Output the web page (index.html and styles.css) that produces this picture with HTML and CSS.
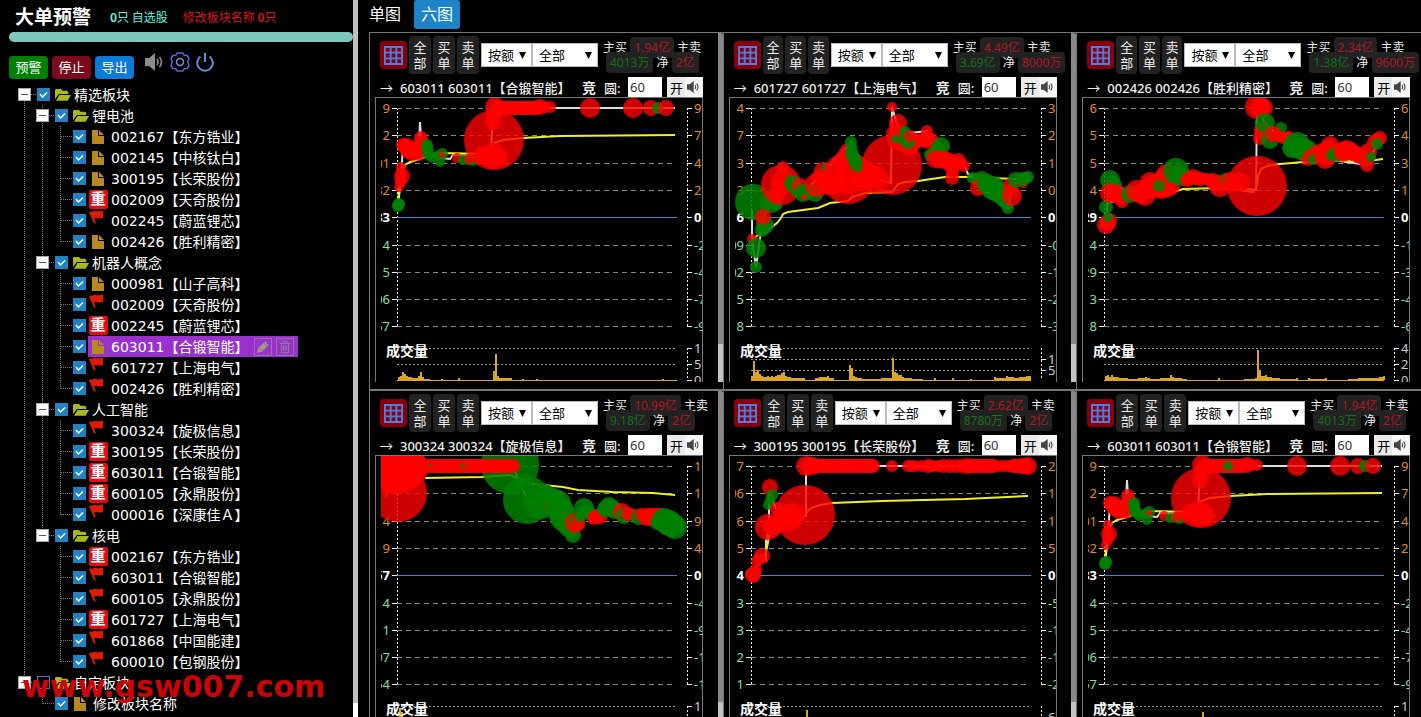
FILE: index.html
```html
<!DOCTYPE html>
<html lang="zh-CN">
<head>
  <meta charset="utf-8">
  <title>大单预警</title>
  <link rel="stylesheet" href="styles.css">
</head>
<body>
  <svg class="defs" aria-hidden="true">
    <symbol id="i-folder" viewBox="0 0 16 14">
      <path fill="#a9b91c" d="M1 12.800 4.300 7H16l-3.300 5.800z"/>
      <path fill="#a9b91c" d="M0 11V2l1-1h5l1.500 1.800H12L13.300 4v2H4z"/>
      <path stroke="#000" stroke-width=".7" fill="none" d="M.5 12.500 4.100 6.500H16"/>
    </symbol>
    <symbol id="i-doc" viewBox="0 0 12 14">
      <path fill="#b8891c" d="M0 0h6v6h6v8H0z"/>
      <path fill="#b8891c" d="M7 0l5 5H7z"/>
    </symbol>
    <symbol id="i-flag" viewBox="0 0 15 14">
      <path fill="#e01b05" d="M0 2l1.500-.8L3 2c3-2.500 6 .5 11-1.500v7.500c-4 1.500-6-.800-9 .5l1.800 5H5z"/>
    </symbol>
    <symbol id="i-grid" viewBox="0 0 20 20">
      <path fill="none" stroke="#4a7fe8" stroke-width="2" d="M1 1h18v18H1zM7 1v18M13 1v18M1 7h18M1 13h18"/>
    </symbol>
    <symbol id="i-sound" viewBox="0 0 18 18">
      <path fill="currentColor" d="M0 5h4l6-5v18l-6-5H0z"/>
      <path fill="none" stroke="currentColor" stroke-width="1.600" d="M12 6q2 3 0 6M14.500 4q4 5 0 10"/>
    </symbol>
    <symbol id="i-pen" viewBox="0 0 16 16">
      <path fill="#a89a7c" d="M2 14l1.200-5L10 2.500 13.500 6 7 12.800z"/>
      <path stroke="#8a55a8" fill="none" d="M4 9l3 3M9 4l3 3"/>
    </symbol>
    <symbol id="i-trash" viewBox="0 0 16 16">
      <path fill="none" stroke="#8b7f9c" d="M3 4.500h10M6 4V2.500h4V4M4.500 5v8.500h7V5M6.500 6.500v5M8 6.500v5M9.500 6.500v5"/>
    </symbol>
  </svg>

  <div class="page">
    <aside class="side">
      <div class="side-body">
        <header class="head">
          <h1>大单预警</h1>
          <span class="mine"><b>0</b>只 自选股</span>
          <span class="edit-count">修改板块名称 <b>0</b>只</span>
        </header>
        <div class="bar"></div>
        <div class="actions">
          <button class="btn btn-warn">预警</button>
          <button class="btn btn-stop">停止</button>
          <button class="btn btn-export">导出</button>
          <button class="icon-btn icon-sound" aria-label="声音"><svg width="18" height="18"><use href="#i-sound"/></svg></button>
          <button class="icon-btn" aria-label="设置">
            <svg width="20" height="20" viewBox="0 0 20 20" fill="none" stroke="#5c62d8" stroke-width="1.500">
              <path d="M7 1h6l1.200 2.300 3 .2L19 6.500l-1.300 3.500L19 13.500l-1.800 3-3 .2L13 19H7l-1.200-2.300-3-.2-1.800-3L2.300 10 1 6.500l1.800-3 3-.2z" stroke-linejoin="round"/>
              <circle cx="10" cy="10" r="3.500" stroke="#8590c8"/>
            </svg>
          </button>
          <button class="icon-btn" aria-label="关闭">
            <svg width="18" height="20" viewBox="0 0 18 20" fill="none" stroke="#5f8fd6" stroke-width="2">
              <path d="M9 1v9M4.500 4.500a7.800 7.800 0 1 0 9 0"/>
            </svg>
          </button>
        </div>
        <ul class="tree" id="tree"></ul>
        <div class="watermark">www.gsw007.com</div>
      </div>
      <div class="side-rail"></div>
    </aside>

    <main class="main">
      <nav class="tabs">
        <a href="#one">单图</a>
        <a href="#six" class="active">六图</a>
      </nav>
      <div class="panels" id="panels"></div>
    </main>
  </div>

  <script src="script.js"></script>
</body>
</html>
```

FILE: styles.css
```css
* {
  box-sizing: border-box;
}

body {
  margin: 0;
  background: #000;
  color: #fff;
  font-family: "Noto Sans", "Noto Sans CJK SC", sans-serif;
  font-size: 13px;
}

button,
select,
input {
  font-family: inherit;
  font-size: 13px;
  margin: 0;
  padding: 0;
  border: 0;
}

svg {
  display: block;
}

.defs {
  position: absolute;
  width: 0;
  height: 0;
}

.page {
  display: flex;
  height: 100vh;
  overflow: hidden;
}

/* sidebar */
.side {
  flex: 0 0 358px;
  display: flex;
  overflow: hidden;
}

.side-body {
  flex: 1;
  position: relative;
}

.side-rail {
  width: 5px;
  background: linear-gradient(#c0c0c4 98%, #fff 98%);
}

.head {
  display: flex;
  align-items: center;
  height: 32px;
  padding-left: 15px;
  font-family: "Noto Sans CJK SC", sans-serif;
  font-size: 12px;
}

.head h1 {
  margin: 0 19px 0 0;
  font-size: 19px;
  line-height: 30px;
}

.mine {
  color: #62f0dc;
  margin-right: 15px;
}

.edit-count {
  color: #dc1515;
}

.bar {
  height: 10px;
  margin-left: 9px;
  border-radius: 5px;
  background: #7cc8bf;
}

.actions {
  display: flex;
  align-items: flex-end;
  gap: 4px;
  height: 42px;
  padding: 0 0 5px 9px;
}

.btn {
  width: 39px;
  height: 23px;
  border-radius: 4px;
  color: #fff;
  line-height: 23px;
}

.btn-warn { background: #008000; }
.btn-stop { background: #7a0a1c; }
.btn-export { background: #0a7bd6; }

.icon-btn {
  align-self: flex-start;
  margin: 10px 2px 0 0;
  background: none;
}

.icon-sound {
  margin: 11px 3px 0 7px;
  color: #8c8c8c;
}

.tree,
.tree ul {
  list-style: none;
  margin: 0;
  padding: 0;
}

.tree {
  padding-left: 16px;
  font-family: "DejaVu Sans", "Noto Sans CJK SC", sans-serif;
  font-size: 14px;
}

.tree ul {
  padding-left: 18px;
}

.tree li {
  position: relative;
}

.tree li::before {
  content: "";
  position: absolute;
  left: 8px;
  top: 0;
  bottom: 0;
  border-left: 1px dotted #777;
}

.tree > li:first-child::before {
  top: 10px;
}

.tree li:last-child::before {
  bottom: auto;
  height: 11px;
}

.row {
  display: flex;
  align-items: center;
  position: relative;
  height: 21px;
}

.row::before {
  content: "";
  position: absolute;
  left: 9px;
  width: 11px;
  border-top: 1px dotted #777;
}

.switch {
  position: relative;
  width: 13px;
  height: 13px;
  margin-left: 2px;
  border: 1px solid #aaa;
  background: linear-gradient(#555, #555) center / 7px 1px no-repeat #fff;
}

.switch-none {
  width: 15px;
}

.row input {
  appearance: none;
  width: 13px;
  height: 13px;
  margin: 0 2px 0 6px;
  border: 1px solid #2a7fb8;
}

.row input:checked {
  background: #1e84c7 url("data:image/svg+xml,%3Csvg xmlns='http://www.w3.org/2000/svg' viewBox='0 0 11 11'%3E%3Cpath d='M2 5l2.500 3L9 3.500' fill='none' stroke='white' stroke-width='1.500'/%3E%3C/svg%3E");
}

.row label {
  padding-bottom: 2px;
}

.name {
  display: flex;
  align-items: center;
  height: 21px;
  white-space: nowrap;
}

.name.on {
  width: 210px;
  background: #9932cc;
}

.ico {
  display: flex;
  justify-content: center;
  width: 20px;
  margin-right: 3px;
}

.group > .row .ico {
  width: 22px;
  margin-right: 0;
}

.ico-flag {
  align-self: flex-start;
  justify-content: flex-start;
  padding-left: 1px;
}

.heavy {
  width: 19px;
  height: 19px;
  border-radius: 2px;
  background: #e60a12;
  color: #fff;
  font-weight: bold;
  font-size: 15px;
  line-height: 19px;
  text-align: center;
}

.tool {
  width: 18px;
  height: 18px;
  margin-left: 4px;
  border: 1px solid #9b6fae;
  background: none;
}

label + .tool {
  margin-left: 6px;
}

.watermark {
  position: absolute;
  top: 669px;
  left: 22px;
  color: #cc0404;
  font: bold 30px/36px "DejaVu Sans", sans-serif;
}

/* right part */
.main {
  flex: 1;
  min-width: 0;
  overflow: hidden;
  padding-left: 11px;
}

.tabs {
  display: flex;
  gap: 13px;
  height: 32px;
}

.tabs a {
  color: #fff;
  font-family: "Noto Sans CJK SC", sans-serif;
  font-size: 16px;
  line-height: 26px;
  text-decoration: none;
}

.tabs .active {
  height: 29px;
  padding: 0 7px;
  border-radius: 3px;
  background: #1e84c7;
}

.panels {
  display: grid;
  grid-template-columns: repeat(3, 1fr);
  margin-right: -9px;
}

.panel {
  display: flex;
  min-width: 0;
  padding-bottom: 7px;
  border: solid #777;
  border-width: 1px 0 1px 1px;
}

.panel-body {
  flex: 1;
  min-width: 0;
}

.rail {
  width: 5px;
  border-radius: 0 2px 0 0;
  background: linear-gradient(#888 89%, #c4c4c4 89%);
}

.toolbar {
  display: flex;
  align-items: center;
  gap: 2px;
  height: 41px;
  padding: 3px 6px 0 10px;
}

.grid-btn {
  flex: none;
  width: 27px;
  height: 28px;
  padding: 0 4px;
  border-radius: 4px;
  background: #8b0008;
}

.side-btn {
  flex: 0 1 22px;
  min-width: 20px;
  height: 38px;
  border-radius: 4px;
  background: #222;
  color: #eee;
  line-height: 16px;
}

.selects {
  display: flex;
  flex: none;
}

.selects select {
  appearance: none;
  height: 24px;
  padding-left: 6px;
  border: 1px solid #bbb;
  border-radius: 0;
  background: #fff url("data:image/svg+xml,%3Csvg xmlns='http://www.w3.org/2000/svg' width='7' height='7'%3E%3Cpath d='M0 0h7L3.500 7z'/%3E%3C/svg%3E") right 5px center no-repeat;
  color: #000;
}

.by { width: 51px; }
.kind { width: 66px; }

.stats {
  flex: none;
  padding-left: 3px;
  color: #eee;
  font-size: 12px;
  line-height: 15px;
  white-space: nowrap;
}

.stats div + div {
  padding-left: 3px;
}

.stats b {
  font-weight: normal;
  padding: 2px 4px;
  border-radius: 4px;
  background: #222;
}

.stats .buy { color: #b01822; }
.stats .sell { color: #14701a; }

.title {
  display: flex;
  align-items: center;
  height: 23px;
  padding: 3px 0 0 10px;
  color: #eee;
  white-space: nowrap;
}

.title .arrow {
  width: 20px;
}

.title .stock {
  width: 182px;
  font-weight: 500;
}

.title .bid {
  width: 22px;
  font-size: 14px;
  font-weight: bold;
}

.title label {
  width: 24px;
  font-weight: 500;
}

.title input {
  width: 34px;
  height: 20px;
  padding-left: 2px;
  background: #fff;
  color: #333;
}

.title button {
  display: flex;
  align-items: center;
  gap: 4px;
  width: 36px;
  height: 20px;
  margin-left: 5px;
  padding-left: 3px;
  background: linear-gradient(90deg, #eaeaea 50%, #f6f6f6 50%);
  color: #000;
}

.title button svg {
  color: #444;
}

.chart {
  width: 328px;
  height: 285px;
  padding-left: 5px;
  margin-left: 5px;
  border: solid #777;
  border-width: 1px 1px 0;
}

.chart svg {
  width: 100%;
  height: 284px;
}

.chart text {
  font-family: "Noto Sans", sans-serif;
  font-size: 13px;
}

.chart .up { fill: #e08a20; }
.chart .zero { fill: #fff; font-weight: bold; }
.chart .down { fill: #7fe0a4; }
.chart .vol { fill: #ccc; }

.chart .vol-title {
  fill: #fff;
  font-family: "Noto Sans CJK SC", sans-serif;
  font-size: 14px;
  font-weight: bold;
}

.chart line,
.chart rect {
  shape-rendering: crispEdges;
}

.grid { stroke: #888; stroke-dasharray: 5 4; }
.dots { stroke: #999; stroke-dasharray: 2 2; }
.axis { stroke: #eee; stroke-dasharray: 2 2; }
.tick { stroke: #eee; }
.base { stroke: #4682c8; }
.price { fill: none; stroke: #ddd; stroke-width: 2; }
.avg { fill: none; stroke: #f0f020; stroke-width: 2; }
.bar-vol { fill: #daa520; }
.r { fill: #f00; fill-opacity: .8; }
.g { fill: #008000; fill-opacity: .85; }
```

FILE: script.js
```js
// d = file, f = flag, z = heavy position
var tree = [
  { name: '精选板块', on: true, items: [
    { name: '锂电池', on: true, items: ['d 002167【东方锆业】', 'd 002145【中核钛白】', 'd 300195【长荣股份】', 'z 002009【天奇股份】', 'f 002245【蔚蓝锂芯】', 'd 002426【胜利精密】'] },
    { name: '机器人概念', on: true, items: ['d 000981【山子高科】', 'f 002009【天奇股份】', 'z 002245【蔚蓝锂芯】', '* 603011【合锻智能】', 'f 601727【上海电气】', 'f 002426【胜利精密】'] },
    { name: '人工智能', on: true, items: ['f 300324【旋极信息】', 'z 300195【长荣股份】', 'z 603011【合锻智能】', 'z 600105【永鼎股份】', 'f 000016【深康佳Ａ】'] },
    { name: '核电', on: true, items: ['z 002167【东方锆业】', 'f 603011【合锻智能】', 'f 600105【永鼎股份】', 'z 601727【上海电气】', 'f 601868【中国能建】', 'f 600010【包钢股份】'] }
  ] },
  { name: '自定板块', on: false, items: ['d 修改板块名称'] }
];

var nodeId = 0;

function use(id, w, h) {
  return '<svg width="' + w + '" height="' + h + '"><use href="#i-' + id + '"/></svg>';
}

function drawNode(node) {
  var id = 'node' + (++nodeId);
  if (typeof node === 'string') {
    var type = node.charAt(0);
    var icon = '<span class="ico">' + use('doc', 12, 14) + '</span>';
    if (type === 'f') icon = '<span class="ico ico-flag">' + use('flag', 15, 14) + '</span>';
    if (type === 'z') icon = '<span class="ico"><span class="heavy">重</span></span>';
    var tools = type === '*'
      ? '<button class="tool" aria-label="编辑">' + use('pen', 16, 16) + '</button><button class="tool" aria-label="删除">' + use('trash', 16, 16) + '</button>'
      : '';
    return '<li><div class="row"><span class="switch-none"></span><input type="checkbox" checked id="' + id + '">' +
      '<div class="name' + (type === '*' ? ' on' : '') + '">' + icon +
      '<label for="' + id + '">' + node.slice(2) + '</label>' + tools + '</div></div></li>';
  }
  return '<li class="group"><div class="row"><button class="switch" aria-label="折叠"></button>' +
    '<input type="checkbox" id="' + id + '"' + (node.on ? ' checked' : '') + '>' +
    '<div class="name"><span class="ico">' + use('folder', 16, 14) + '</span>' +
    '<label for="' + id + '">' + node.name + '</label></div></div>' +
    '<ul>' + node.items.map(drawNode).join('') + '</ul></li>';
}

document.getElementById('tree').innerHTML = tree.map(drawNode).join('');

// circles: colour + x,y,r; "x1-x2,y,r" is a run of circles
var hd = {
  left: ['9', '2', '01', '32', '33', '4', '5', '06', '57'],
  right: ['9', '7', '4', '2', '0', '-2', '-4', '-7', '-9'],
  price: '17,108 19,90 22,50 38,45 39,24 40,40 45,55 60,60 69,61 72,57 90,58 110,58 112,10 294,10',
  avg: '17,104 18,92 20,76 24,67 29,64 39,61 50,57 59,55 110,56 113,45 122,42 142,40 179,38 294,37',
  dots: 'g17,108,6 g18,106,6 r21,78,8 r18,89,5 r20,69,5 r20,83,6 r22,47,7 r26,49,9 r31,55,8 r40,40,7 r41,49,9 r38,57,6 r28,52,9 g46,47,6 g47,55,6 g51,60,5 g61,56,6 r61,57,3 g59,64,5 r76,60,5 g82,62,5 g92,62,6 r88,61,5 r113,42,30 r112,58,13 r102,57,9 r118,60,9 r112,24,8 r114,9,10 r118-155,10,7 r159,9,8 r169,9,6 r209,10,10 r252,10,10 r270,10,8 g277,10,6 r285,10,8',
  volTicks: [[250, '10'], [266, '5'], [282, '0']],
  vol: '17,3 19,4 21,8 23,6 25,4 27,3 29,3 34,2 37,4 39,8 41,3 47,1 60,1 77,2 112,9 114,26 116,4 118,2 120,2 129,2 141,1 155,1 281,1'
};

var charts = [
  { code: '603011', name: '合锻智能', buy: '1.94亿', sell: '4013万', net: '2亿', data: hd },
  { code: '601727', name: '上海电气', buy: '4.49亿', sell: '3.69亿', net: '8000万', data: {
    left: ['4', '7', '3', '3', '6', '09', '02', '5', '8'],
    right: ['3', '2', '1', '0', '0', '-0', '-1', '-2', '-3'],
    price: '17,112 17,142 21,169 28,119 46,87 68,95 90,73 116,44 130,78 156,85 157,9 163,30 175,35 192,33 206,48 217,70 229,66 233,76 247,82 273,110 278,87 293,79',
    avg: '17,142 23,137 33,132 42,125 46,120 48,116 53,114 83,110 95,105 113,103 117,99 130,95 157,94 163,86 170,84 183,83 210,79 233,79 280,81 294,80',
    dots: 'g18,104,18 g36,104,11 g42,106,6 g30,127,9 g27,132,7 r28,119,8 r17,141,5 g21,150,10 g21,169,6 r46,87,20 r48,69,6 r42,97,8 r48,84,12 g57,85,8 g62,92,7 r65,88,8 g68,95,9 g74,93,7 r69,99,3 g80,95,9 r82,87,12 r88,73,9 g90,70,4 r92,88,9 r113,80,26 r130,78,15 r113,82,15 r98,84,13 r105,65,9 r113,53,8 g116,44,6 g117,56,7 g122,67,7 r157,67,30 r140,82,14 r157,9,5 r163,25,9 r157,35,6 r163,41,11 r170,44,10 r175,50,8 r180,43,8 g170,34,6 g173,44,7 g160,41,4 r175,38,6 r192,33,6 r193,43,8 r187,42,7 r198,42,6 g206,48,9 g200,55,7 g195,57,6 r200,61,9 r210,62,9 r218,66,9 r217,80,7 r223,63,8 r229,68,6 g238,80,6 g247,82,9 r243,90,8 g252,86,10 g258,90,12 g263,95,10 g268,101,8 g273,110,6 r277,98,10 r275,87,7 g281,82,8 r288,85,5 g288,81,7 g293,79,6',
    volTicks: [[250, ''], [261, '10'], [272, '5']],
    vol: '16,4 18,19 20,8 22,10 24,6 26,4 28,3 30,3 32,4 34,3 36,4 38,3 40,4 42,5 44,5 46,7 48,8 50,4 52,3 54,3 60,2 68,2 80,2 84,3 87,3 92,4 97,2 114,15 116,12 118,4 120,3 122,2 125,2 135,1 146,2 157,22 159,8 161,7 163,5 165,5 167,3 170,2 175,2 186,1 199,2 217,2 235,1 259,3 268,2 271,4 274,3 277,3 280,2 284,3 288,3 291,4 294,4'
  } },
  { code: '002426', name: '胜利精密', buy: '2.34亿', sell: '1.38亿', net: '9600万', data: {
    left: ['6', '5', '5', '4', '29', '4', '29', '3', '8'],
    right: ['6', '4', '3', '1', '0', '-1', '-3', '-4', '-6'],
    price: '18,127 19,110 22,82 42,96 88,73 132,88 168,92 169,9 177,25 193,40 219,53 237,61 279,67 292,40',
    avg: '19,105 35,101 55,99 82,95 95,91 132,90 165,94 169,88 170,78 173,71 179,68 192,66 215,64 249,63 280,63 295,61',
    dots: 'g18,109,7 r18,127,9 r21,123,8 g20,119,5 g22,82,10 g27,87,7 r22,95,10 r30,96,9 r34,103,7 g42,96,9 g42,93,5 r49,93,11 r57,98,10 r62,84,10 r66,90,11 r79,77,11 r82,88,10 r74,91,10 r76,80,10 g71,88,6 g88,73,13 g93,79,9 r99,82,7 r105,79,8 r112,81,7 r119,81,6 r125,83,8 r132,88,11 g137,81,6 r142,84,10 r169,88,30 r152,84,10 r169,9,12 r175,10,10 r175,32,9 r172,40,7 g177,25,10 g182,42,9 g193,30,6 r185,36,8 r195,40,6 r201,39,6 g209,47,13 g204,50,10 g214,51,11 g219,53,11 g223,58,8 r220,61,7 r228,54,7 g226,61,6 r242,47,9 r240,55,11 r237,61,10 r234,54,9 g249,56,8 g244,57,6 r255,54,10 r259,52,10 r264,54,9 r270,57,8 r277,62,7 r280,54,9 r279,67,7 g283,59,5 r292,40,7 r286,44,7 g289,46,6',
    volTicks: [[250, '4'], [266, '2'], [282, '0']],
    vol: '17,4 19,5 21,3 23,5 25,3 27,3 29,3 31,2 34,2 38,2 44,1 50,2 57,3 60,2 66,1 72,2 82,5 84,3 88,2 92,2 97,1 130,2 156,1 167,2 169,30 171,10 173,4 175,4 177,5 179,3 182,3 186,2 190,2 200,1 208,2 220,2 230,1 237,2 260,1 270,2 276,2 282,2 288,2 291,3 295,4'
  } },
  { code: '300324', name: '旋极信息', buy: '10.99亿', sell: '9.18亿', net: '2亿', data: {
    left: ['1', '7', '4', '9', '57', '4', '11', '07', '54'],
    right: ['17', '13', '9', '4', '0', '-4', '-9', '-1', '-1'],
    price: '17,37 27,10 132,10 146,44 182,62 192,79 203,60 228,55 258,61 294,71',
    avg: '44,22 101,21 129,19 140,24 152,28 182,31 197,34 232,36 272,37 294,39',
    dots: 'r17,37,29 r8,8,30 r17,10,28 r16,8,28 r27,12,20 g129,9,29 r42-132,10,7 g50,10,3 r54,10,6 g84,10,4 r88,10,6 g146,44,24 g160,45,18 g166,45,12 g172,45,13 r166,50,4 g176,48,14 g180,55,13 g182,62,13 g188,70,11 g192,79,8 r194,67,10 g194,65,5 r197,68,7 g200,60,6 g203,52,10 g208,57,7 r213,62,7 r219,60,8 g224,53,8 g228,50,9 g233,54,9 r241,56,9 g243,60,8 r247,58,7 r253,59,6 g258,61,8 r260,58,6 r266,61,9 r272,61,9 r279,61,9 g276,67,7 g283,64,12 g288,67,13 g294,71,12',
    volTicks: [[250, '1']],
    vol: '18,30 20,26'
  } },
  { code: '300195', name: '长荣股份', buy: '2.62亿', sell: '8780万', net: '2亿', data: {
    left: ['7', '06', '6', '5', '4', '3', '3', '2', '1'],
    right: ['2', '1', '1', '5', '0', '-5', '-1', '-1', '-2'],
    price: '18,119 27,100 31,104 31,85 34,70 34,35 42,55 68,60 71,60 71,10 293,10',
    avg: '20,112 28,105 31,96 33,86 36,72 40,66 68,62 72,56 76,52 85,49 97,47 147,45 230,43 293,40',
    dots: 'g15,118,5 r18,119,8 r21,114,6 r19,120,6 r27,100,8 r22,105,6 r33,71,13 r40,70,9 r35,31,8 g33,49,5 g37,39,6 r42,53,7 r70,59,30 r53,62,14 r45,61,8 r58,59,12 r71,10,10 r78,10,9 r84-140,10,7 r157,10,6 r173,10,6 r180,10,6 r193,10,7 r198,10,6 r208,10,7 r221,10,7 r232,10,8 r237-258,10,7 r267,10,6 r278-284,10,7 r287,10,8 r293,10,9',
    volTicks: [[250, ''], [261, '6']],
    vol: '71,28'
  } },
  { code: '603011', name: '合锻智能', buy: '1.94亿', sell: '4013万', net: '2亿', data: Object.assign({}, hd, {
    dots: hd.dots.replace('r159', 'g140,10,5 r159'),
    volTicks: [[250, '10']]
  }) }
];

function line(cls, x1, y1, x2, y2) {
  return '<line class="' + cls + '" x1="' + x1 + '" y1="' + y1 + '" x2="' + x2 + '" y2="' + y2 + '"/>';
}

function text(cls, x, y, str, anchor) {
  return '<text class="' + cls + '" x="' + x + '" y="' + y + '" text-anchor="' + anchor + '">' + str + '</text>';
}

function circle(cls, x, y, r) {
  return '<circle class="' + cls + '" cx="' + x + '" cy="' + y + '" r="' + r + '"/>';
}

function drawDots(str) {
  var prev = null;
  return str.split(' ').map(function (d) {
    var cls = d.charAt(0);
    var p = d.slice(1).split(',');
    var y = +p[1];
    var r = +p[2];
    var range = p[0].split('-').map(Number);
    var end = range.length > 1 ? range[1] : range[0];
    var out = '';
    for (var x = range[0]; x <= end; x += 3) {
      // fill the step between two near orders of one colour
      if (prev && prev.cls === cls && r < 14 && prev.r < 14 && Math.hypot(prev.x - x, prev.y - y) < 16) {
        out += circle(cls, (prev.x + x) / 2, (prev.y + y) / 2, Math.min(r, prev.r));
      }
      out += circle(cls, x, y, r);
      prev = { cls: cls, x: x, y: y, r: r };
    }
    return out;
  }).join('');
}

function drawVolume(str) {
  var prev = null;
  return str.split(' ').map(function (v) {
    var p = v.split(',').map(Number);
    var out = '';
    if (prev && p[0] - prev[0] < 12) {
      var h = Math.min(p[1], prev[1]);
      out += '<rect class="bar-vol" x="' + prev[0] + '" y="' + (282 - h) + '" width="' + (p[0] - prev[0]) + '" height="' + h + '"/>';
    }
    prev = p;
    return out + '<rect class="bar-vol" x="' + p[0] + '" y="' + (282 - p[1]) + '" width="2" height="' + p[1] + '"/>';
  }).join('');
}

function drawChart(c) {
  var out = line('axis', 16, 10, 16, 228) + line('axis', 306, 10, 306, 228) + line('axis', 306, 250, 306, 282);
  for (var i = 0; i < 9; i++) {
    var y = Math.round(10 + i * 27.3);
    var cls = i < 4 ? 'up' : i === 4 ? 'zero' : 'down';
    out += line(i === 4 ? 'base' : 'grid', 16, y, i === 4 ? 296 : 294, y);
    out += line('tick', 11, y, 16, y) + line('tick', 306, y, 311, y);
    out += text(cls, 9, y + 5, c.left[i], 'end') + text(cls, 313, y + 5, c.right[i], 'start');
  }
  c.volTicks.forEach(function (t) {
    out += line('dots', 16, t[0], 294, t[0]);
    if (t[1]) out += line('tick', 306, t[0], 311, t[0]) + text('vol', 313, t[0] + 5, t[1], 'start');
  });
  out += '<rect class="bar-vol" x="16" y="282" width="280" height="1"/>' + drawVolume(c.vol);
  out += text('vol-title', 5, 258, '成交量', 'start');
  out += '<polyline class="price" points="' + c.price + '"/><polyline class="avg" points="' + c.avg + '"/>';
  return '<svg>' + out + drawDots(c.dots) + '</svg>';
}

document.getElementById('panels').innerHTML = charts.map(function (c, i) {
  return '<section class="panel"><div class="panel-body">' +
    '<div class="toolbar">' +
      '<button class="grid-btn" aria-label="表格">' + use('grid', 19, 19) + '</button>' +
      '<button class="side-btn">全<br>部</button><button class="side-btn">买<br>单</button><button class="side-btn">卖<br>单</button>' +
      '<div class="selects"><select class="by" aria-label="方式"><option>按额</option></select>' +
      '<select class="kind" aria-label="范围"><option>全部</option></select></div>' +
      '<div class="stats"><div>主买 <b class="buy">' + c.buy + '</b> 主卖</div>' +
      '<div><b class="sell">' + c.sell + '</b> 净 <b class="buy">' + c.net + '</b></div></div>' +
    '</div>' +
    '<div class="title"><span class="arrow">→</span>' +
      '<span class="stock">' + c.code + ' ' + c.code + '【' + c.name + '】</span><span class="bid">竞</span>' +
      '<label for="size' + i + '">圆:</label><input type="text" id="size' + i + '" value="60">' +
      '<button>开' + use('sound', 12, 12) + '</button></div>' +
    '<div class="chart">' + drawChart(c.data) + '</div>' +
    '</div><div class="rail"></div></section>';
}).join('');
```
